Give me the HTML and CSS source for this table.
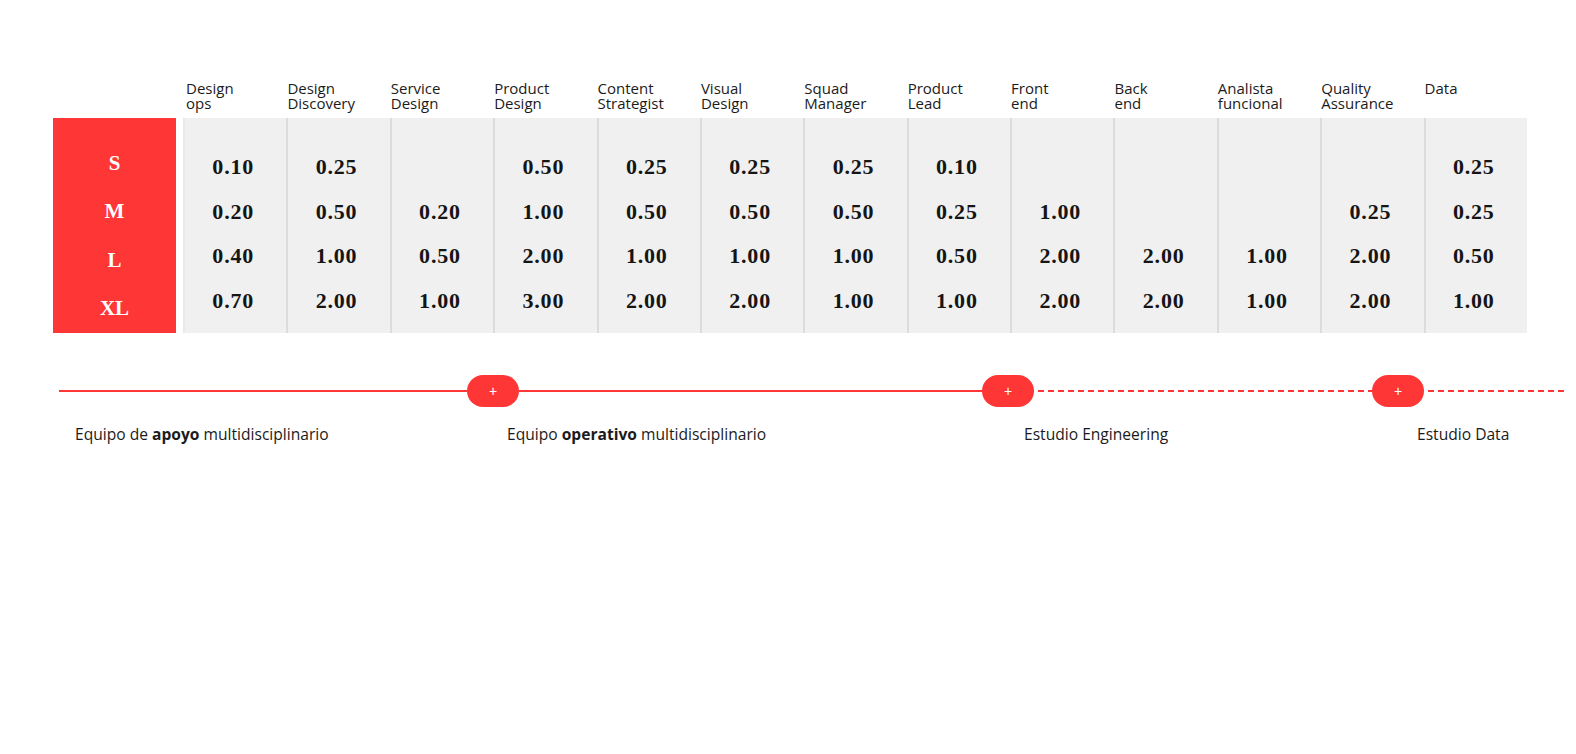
FILE: index.html
```html
<!DOCTYPE html>
<html lang="es">
<head>
<meta charset="utf-8">
<title>Matriz de dedicación</title>
<link rel="stylesheet" href="styles.css">
</head>
<body>
<div class="page">
  <div class="matrix">
    <div class="head">
      <div class="corner"></div>
      <div class="cols">
        <div class="hcell">Design<br>ops</div>
        <div class="hcell">Design<br>Discovery</div>
        <div class="hcell">Service<br>Design</div>
        <div class="hcell">Product<br>Design</div>
        <div class="hcell">Content<br>Strategist</div>
        <div class="hcell">Visual<br>Design</div>
        <div class="hcell">Squad<br>Manager</div>
        <div class="hcell">Product<br>Lead</div>
        <div class="hcell">Front<br>end</div>
        <div class="hcell">Back<br>end</div>
        <div class="hcell">Analista<br>funcional</div>
        <div class="hcell">Quality<br>Assurance</div>
        <div class="hcell">Data</div>
      </div>
    </div>
    <div class="body">
      <div class="sizes">
        <div class="size">S</div>
        <div class="size">M</div>
        <div class="size">L</div>
        <div class="size">XL</div>
      </div>
      <div class="cols values">
        <div class="col first"><div class="v">0.10</div><div class="v">0.20</div><div class="v">0.40</div><div class="v">0.70</div></div>
        <div class="col"><div class="v">0.25</div><div class="v">0.50</div><div class="v">1.00</div><div class="v">2.00</div></div>
        <div class="col"><div class="v"></div><div class="v">0.20</div><div class="v">0.50</div><div class="v">1.00</div></div>
        <div class="col"><div class="v">0.50</div><div class="v">1.00</div><div class="v">2.00</div><div class="v">3.00</div></div>
        <div class="col"><div class="v">0.25</div><div class="v">0.50</div><div class="v">1.00</div><div class="v">2.00</div></div>
        <div class="col"><div class="v">0.25</div><div class="v">0.50</div><div class="v">1.00</div><div class="v">2.00</div></div>
        <div class="col"><div class="v">0.25</div><div class="v">0.50</div><div class="v">1.00</div><div class="v">1.00</div></div>
        <div class="col"><div class="v">0.10</div><div class="v">0.25</div><div class="v">0.50</div><div class="v">1.00</div></div>
        <div class="col"><div class="v"></div><div class="v">1.00</div><div class="v">2.00</div><div class="v">2.00</div></div>
        <div class="col"><div class="v"></div><div class="v"></div><div class="v">2.00</div><div class="v">2.00</div></div>
        <div class="col"><div class="v"></div><div class="v"></div><div class="v">1.00</div><div class="v">1.00</div></div>
        <div class="col"><div class="v"></div><div class="v">0.25</div><div class="v">2.00</div><div class="v">2.00</div></div>
        <div class="col"><div class="v">0.25</div><div class="v">0.25</div><div class="v">0.50</div><div class="v">1.00</div></div>
      </div>
    </div>
  </div>

  <div class="timeline">
    <div class="seg seg1">
      <div class="track"><div class="line solid"></div></div>
      <div class="label">Equipo de <b>apoyo</b> multidisciplinario</div>
    </div>
    <div class="seg seg2">
      <div class="track"><div class="pill">+</div><div class="line solid"></div></div>
      <div class="label">Equipo <b>operativo</b> multidisciplinario</div>
    </div>
    <div class="seg seg3">
      <div class="track"><div class="pill">+</div><div class="line dashed"></div></div>
      <div class="label">Estudio Engineering</div>
    </div>
    <div class="seg seg4">
      <div class="track"><div class="pill">+</div><div class="line dashed"></div></div>
      <div class="label">Estudio Data</div>
    </div>
  </div>
</div>
</body>
</html>
```

FILE: styles.css
```css
html, body {
  margin: 0;
  padding: 0;
  background: #ffffff;
}

body {
  font-family: "Open Sans", "Noto Sans", "Liberation Sans", sans-serif;
  color: #1b1b1b;
}

.page {
  padding-top: 81px;
}

.matrix {
  margin-left: 53px;
  width: 1474px;
}

.head,
.body {
  display: flex;
  gap: 7px;
}

.corner,
.sizes {
  width: 123px;
  flex: none;
}

.cols {
  flex: 1;
  display: grid;
  grid-template-columns: repeat(13, 1fr);
}

.head {
  height: 37px;
}

.hcell {
  font-size: 15px;
  line-height: 14.5px;
  padding-left: 1px;
  color: #1b1b1b;
}

.hcell:first-child {
  padding-left: 3px;
}

.sizes {
  background: #fe3636;
  height: 215px;
  padding-top: 21px;
  box-sizing: border-box;
}

.size {
  height: 48.5px;
  display: flex;
  align-items: center;
  justify-content: center;
  color: #ffffff;
  font-family: "Liberation Serif", "Times New Roman", serif;
  font-weight: 700;
  font-size: 21px;
}

.values {
  background: #f0f0f0;
  height: 215px;
}

.col {
  border-left: 2px solid #dcdcdc;
  padding-top: 27px;
}

.col.first {
  border-left-color: #e9e9e9;
}

.v {
  height: 44.5px;
  display: flex;
  align-items: center;
  justify-content: center;
  padding-right: 5px;
  font-family: "Liberation Serif", "Times New Roman", serif;
  font-weight: 700;
  font-size: 22px;
  letter-spacing: 0.8px;
  color: #151515;
}

.timeline {
  display: flex;
  margin-left: 59px;
  margin-top: 42px;
}

.seg {
  flex: none;
}

.seg1 { width: 408px; }
.seg2 { width: 515px; }
.seg3 { width: 390px; }
.seg4 { width: 193px; }

.track {
  height: 32px;
  display: flex;
  align-items: center;
}

.pill {
  width: 52px;
  height: 32px;
  border-radius: 16px;
  background: #fe3636;
  color: #ffffff;
  flex: none;
  display: flex;
  align-items: center;
  justify-content: center;
  font-size: 14px;
  line-height: 1;
  font-family: "Liberation Sans", Arial, sans-serif;
}

.line {
  flex: 1;
  height: 2px;
}

.line.solid {
  background: #fe3636;
}

.line.dashed {
  margin-left: 4px;
  background: repeating-linear-gradient(to right, #fe3636 0 6px, transparent 6px 10px);
}

.label {
  margin-top: 17px;
  font-size: 15.6px;
  line-height: 20px;
  white-space: nowrap;
}

.seg1 .label { padding-left: 16px; }
.seg2 .label { padding-left: 40px; }
.seg3 .label { padding-left: 42px; }
.seg4 .label { padding-left: 45px; }

.label b {
  font-weight: 700;
}
```
